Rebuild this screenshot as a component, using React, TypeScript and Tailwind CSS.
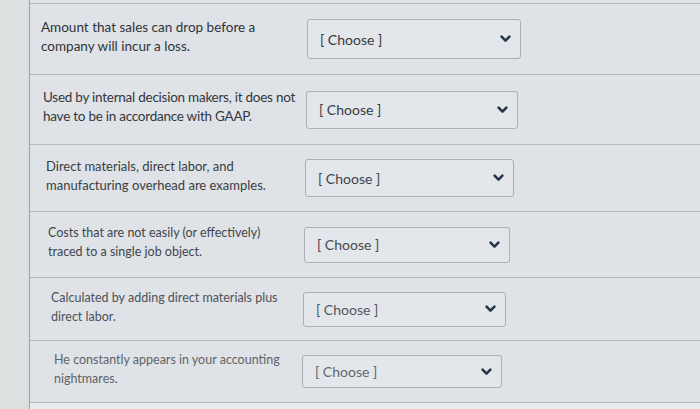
import React from "react";

type Row = {
  lines: string[];
  h: string;
  pl: string;
  textW: string;
  selW: string;
  selH: string;
  size: string;
  color: string;
  choose: string;
};

const rows: Row[] = [
  {
    lines: ["Amount that sales can drop before a", "company will incur a loss."],
    h: "h-[71px]", pl: "pl-[11px]", textW: "w-[266px]", selW: "w-[214px]", selH: "h-[40px]",
    size: "text-[13.5px]", color: "text-[#2f3439]", choose: "text-[#343a40]",
  },
  {
    lines: ["Used by internal decision makers, it does not", "have to be in accordance with GAAP."],
    h: "h-[70px]", pl: "pl-[13px]", textW: "w-[263px]", selW: "w-[212px]", selH: "h-[38px]",
    size: "text-[13.5px] tracking-[-0.25px]", color: "text-[#33383d]", choose: "text-[#373c42]",
  },
  {
    lines: ["Direct materials, direct labor, and", "manufacturing overhead are examples."],
    h: "h-[67px]", pl: "pl-[16px]", textW: "w-[259px]", selW: "w-[209px]", selH: "h-[38px]",
    size: "text-[13px]", color: "text-[#393e43]", choose: "text-[#3f444a]",
  },
  {
    lines: ["Costs that are not easily (or effectively)", "traced to a single job object."],
    h: "h-[66px]", pl: "pl-[18px]", textW: "w-[256px]", selW: "w-[206px]", selH: "h-[36px]",
    size: "text-[12.5px]", color: "text-[#41464c]", choose: "text-[#464b51]",
  },
  {
    lines: ["Calculated by adding direct materials plus", "direct labor."],
    h: "h-[63px]", pl: "pl-[21px]", textW: "w-[252px]", selW: "w-[203px]", selH: "h-[35px]",
    size: "text-[12.5px]", color: "text-[#4d5359]", choose: "text-[#52575e]",
  },
  {
    lines: ["He constantly appears in your accounting", "nightmares."],
    h: "h-[62px]", pl: "pl-[24px]", textW: "w-[248px]", selW: "w-[200px]", selH: "h-[33px]",
    size: "text-[12.5px]", color: "text-[#5e646a]", choose: "text-[#62686e]",
  },
];

function Chevron() {
  return (
    <svg width="11" height="8" viewBox="0 0 11 8" className="text-[#26354a]">
      <path d="M1.6 1.6 L5.5 5.6 L9.4 1.6" fill="none" stroke="currentColor" strokeWidth="2.6" strokeLinecap="round" strokeLinejoin="round" />
    </svg>
  );
}

export default function App() {
  return (
    <div className="flex h-[409px] w-[700px] overflow-hidden bg-[#dcdfe1] font-['Lato','Open_Sans',sans-serif]">
      <div className="w-[29px] shrink-0 bg-[#dde0e0]" />
      <div className="flex flex-1 flex-col border-l border-[#9ca0a5] bg-[#dfe2e6]">
        <div className="h-[4px] border-b border-[#b3b7bb]" />
        {rows.map((r, i) => (
          <div key={i} className={`flex ${r.h} items-center border-b border-[#b5b9bd] ${r.pl}`}>
            <div className={`${r.textW} -mt-[5px] shrink-0 whitespace-nowrap leading-[19px] ${r.size} ${r.color}`}>
              {r.lines.map((l, j) => (
                <div key={j}>{l}</div>
              ))}
            </div>
            <div
              className={`flex ${r.selW} ${r.selH} items-center justify-between rounded-[3px] border border-[#aab0b7] bg-[#e3e6ea] pl-[12px] pr-[9px]`}
            >
              <span className={`text-[14px] ${r.choose}`}>[ Choose ]</span>
              <Chevron />
            </div>
          </div>
        ))}
        <div className="flex-1 bg-[#e9ebed]" />
      </div>
    </div>
  );
}
